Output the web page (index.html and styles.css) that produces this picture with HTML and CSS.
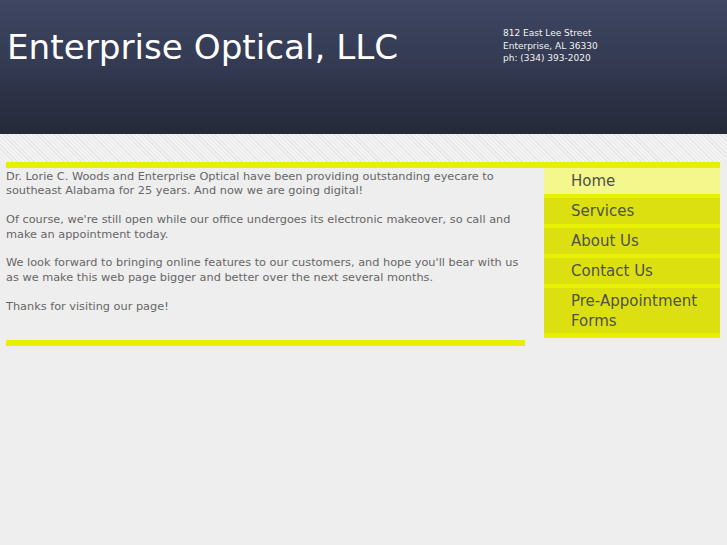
FILE: index.html
```html
<!DOCTYPE html>
<html>
<head>
<meta charset="utf-8">
<title>Enterprise Optical, LLC</title>
<link rel="stylesheet" href="styles.css">
</head>
<body>
<header class="header">
  <h1 class="title">Enterprise Optical, LLC</h1>
  <div class="address">
    812 East Lee Street<br>
    Enterprise, AL 36330<br>
    ph: (334) 393-2020
  </div>
</header>
<div class="hatch"></div>
<main class="main">
  <div class="content">
    <p class="text">Dr. Lorie C. Woods and Enterprise Optical have been providing outstanding eyecare to southeast Alabama for 25 years. And now we are going digital!<br><br>Of course, we're still open while our office undergoes its electronic makeover, so call and make an appointment today.<br><br>We look forward to bringing online features to our customers, and hope you'll bear with us as we make this web page bigger and better over the next several months.<br><br>Thanks for visiting our page!</p>
    <div class="bottom-bar"></div>
  </div>
  <nav class="nav">
    <a class="nav-item active" href="#">Home</a>
    <a class="nav-item" href="#">Services</a>
    <a class="nav-item" href="#">About Us</a>
    <a class="nav-item" href="#">Contact Us</a>
    <a class="nav-item last" href="#">Pre-Appointment Forms</a>
  </nav>
</main>
</body>
</html>
```
FILE: styles.css
```css
html, body {
  margin: 0;
  padding: 0;
}
body {
  background: #eeeeee;
  font-family: "DejaVu Sans", Verdana, sans-serif;
  width: 727px;
  height: 545px;
  overflow: hidden;
}
.header {
  height: 134px;
  background: linear-gradient(to bottom, #3e4662 0%, #343b53 45%, #2b3044 75%, #252a3a 100%);
  display: flex;
  align-items: flex-start;
  box-sizing: border-box;
}
.title {
  margin: 0;
  padding: 26px 0 0 7px;
  font-weight: normal;
  font-size: 34.2px;
  line-height: 42px;
  color: #ffffff;
  width: 496px;
  white-space: nowrap;
}
.address {
  padding-top: 27px;
  font-size: 9px;
  line-height: 12.5px;
  color: #f2f2f2;
}
.hatch {
  height: 28px;
  background: repeating-linear-gradient(45deg, #e6e6e6 0px, #e6e6e6 1px, #f3f3f3 1px, #f3f3f3 3px);
}
.main {
  display: flex;
  align-items: flex-start;
  margin: 0 7px 0 6px;
  border-top: 6px solid #e6f000;
}
.content {
  width: 519px;
}
.text {
  margin: 0;
  padding-top: 2px;
  font-size: 11.3px;
  line-height: 14.4px;
  color: #666666;
  padding-bottom: 26px;
}
.bottom-bar {
  height: 6px;
  background: #e6f000;
}
.nav {
  margin-left: 19px;
  width: 176px;
  display: flex;
  flex-direction: column;
}
.nav-item {
  display: block;
  padding: 3px 10px 3px 27px;
  font-size: 15px;
  line-height: 20px;
  color: #525248;
  text-decoration: none;
  background: #dce010;
  border-bottom: 4px solid #e6f000;
}
.nav-item.active {
  background: #f3f78c;
}
.nav-item.last {
  padding-bottom: 2px;
  border-bottom-width: 5px;
}
```
